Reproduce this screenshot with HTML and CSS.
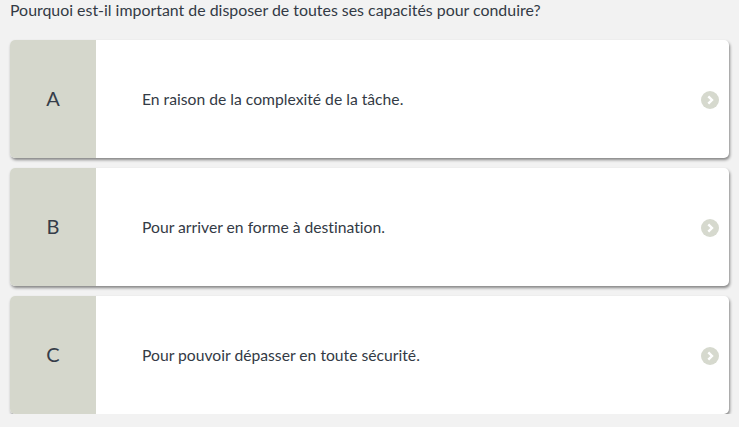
FILE: index.html
```html
<!DOCTYPE html>
<html lang="fr">
<head>
<meta charset="utf-8">
<link rel="stylesheet" href="styles.css">
</head>
<body>
<div class="page">
  <p class="question">Pourquoi est-il important de disposer de toutes ses capacités pour conduire?</p>
  <div class="answers">
    <div class="card">
      <div class="letter">A</div>
      <div class="text">En raison de la complexité de la tâche.</div>
      <svg class="chev" width="18" height="18" viewBox="0 0 18 18"><circle cx="9" cy="9" r="9" fill="#d6d9ce"/><path d="M7.3 5.3 L11 9 L7.3 12.7" fill="none" stroke="#fff" stroke-width="2.4"/></svg>
    </div>
    <div class="card">
      <div class="letter">B</div>
      <div class="text">Pour arriver en forme à destination.</div>
      <svg class="chev" width="18" height="18" viewBox="0 0 18 18"><circle cx="9" cy="9" r="9" fill="#d6d9ce"/><path d="M7.3 5.3 L11 9 L7.3 12.7" fill="none" stroke="#fff" stroke-width="2.4"/></svg>
    </div>
    <div class="card">
      <div class="letter">C</div>
      <div class="text">Pour pouvoir dépasser en toute sécurité.</div>
      <svg class="chev" width="18" height="18" viewBox="0 0 18 18"><circle cx="9" cy="9" r="9" fill="#d6d9ce"/><path d="M7.3 5.3 L11 9 L7.3 12.7" fill="none" stroke="#fff" stroke-width="2.4"/></svg>
    </div>
  </div>
</div>
</body>
</html>
```
FILE: styles.css
```css
html, body {
  margin: 0;
  padding: 0;
  background: #f2f2f2;
  font-family: Lato, "Open Sans", sans-serif;
  font-variant-ligatures: none;
}
.page {
  padding: 0 10px 0 10px;
}
.question {
  margin: 0;
  padding-top: 0;
  font-size: 15.9px;
  line-height: 19px;
  color: #333a45;
}
.answers {
  margin-top: 21px;
  display: flex;
  flex-direction: column;
  gap: 10px;
}
.card {
  height: 118px;
  display: flex;
  align-items: center;
  background: #fff;
  border-radius: 5px;
  overflow: hidden;
  box-shadow: 1px 2px 3px rgba(0,0,0,0.45);
}
.letter {
  width: 86px;
  align-self: stretch;
  background: #d5d7cc;
  display: flex;
  align-items: center;
  justify-content: center;
  font-size: 20px;
  color: #363d49;
  padding-bottom: 3px;
  box-sizing: border-box;
}
.text {
  flex: 1;
  padding-left: 46px;
  font-size: 15.7px;
  color: #333a45;
  padding-bottom: 1px;
}
.chev {
  margin-right: 10px;
  margin-top: 2px;
  flex: none;
}
```
